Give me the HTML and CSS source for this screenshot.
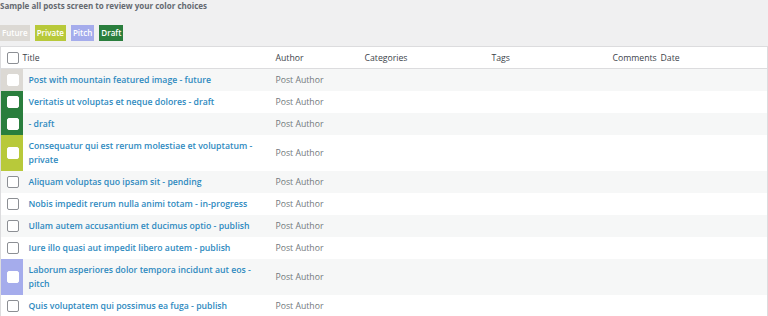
FILE: index.html
```html
<!DOCTYPE html>
<html>
<head>
  <link rel="stylesheet" href="styles.css">
</head>
<body>
  <div class="page">
    <div class="intro">Sample all posts screen to review your color choices</div>

    <div class="legend">
      <span class="badge future">Future</span>
      <span class="badge private">Private</span>
      <span class="badge pitch">Pitch</span>
      <span class="badge draft">Draft</span>
    </div>

    <table class="posts">
      <colgroup>
        <col class="col-cb">
        <col class="col-title">
        <col class="col-author">
        <col class="col-cats">
        <col class="col-tags">
        <col class="col-comments">
        <col class="col-date">
      </colgroup>
      <thead>
        <tr>
          <th class="cb"><span class="check"></span></th>
          <th class="head-title">Title</th>
          <th>Author</th>
          <th>Categories</th>
          <th>Tags</th>
          <th>Comments</th>
          <th>Date</th>
        </tr>
      </thead>
      <tbody>
        <tr class="status-future">
          <td class="cb"><span class="check"></span></td>
          <td class="title"><a href="#">Post with mountain featured image - future</a></td>
          <td class="author">Post Author</td><td></td><td></td><td></td><td></td>
        </tr>
        <tr class="status-draft">
          <td class="cb"><span class="check"></span></td>
          <td class="title"><a href="#">Veritatis ut voluptas et neque dolores - draft</a></td>
          <td class="author">Post Author</td><td></td><td></td><td></td><td></td>
        </tr>
        <tr class="status-draft">
          <td class="cb"><span class="check"></span></td>
          <td class="title"><a href="#">- draft</a></td>
          <td class="author">Post Author</td><td></td><td></td><td></td><td></td>
        </tr>
        <tr class="status-private">
          <td class="cb"><span class="check"></span></td>
          <td class="title"><a href="#">Consequatur qui est rerum molestiae et voluptatum - private</a></td>
          <td class="author">Post Author</td><td></td><td></td><td></td><td></td>
        </tr>
        <tr>
          <td class="cb"><span class="check"></span></td>
          <td class="title"><a href="#">Aliquam voluptas quo ipsam sit - pending</a></td>
          <td class="author">Post Author</td><td></td><td></td><td></td><td></td>
        </tr>
        <tr>
          <td class="cb"><span class="check"></span></td>
          <td class="title"><a href="#">Nobis impedit rerum nulla animi totam - in-progress</a></td>
          <td class="author">Post Author</td><td></td><td></td><td></td><td></td>
        </tr>
        <tr>
          <td class="cb"><span class="check"></span></td>
          <td class="title"><a href="#">Ullam autem accusantium et ducimus optio - publish</a></td>
          <td class="author">Post Author</td><td></td><td></td><td></td><td></td>
        </tr>
        <tr>
          <td class="cb"><span class="check"></span></td>
          <td class="title"><a href="#">Iure illo quasi aut impedit libero autem - publish</a></td>
          <td class="author">Post Author</td><td></td><td></td><td></td><td></td>
        </tr>
        <tr class="status-pitch">
          <td class="cb"><span class="check"></span></td>
          <td class="title"><a href="#">Laborum asperiores dolor tempora incidunt aut eos - pitch</a></td>
          <td class="author">Post Author</td><td></td><td></td><td></td><td></td>
        </tr>
        <tr>
          <td class="cb"><span class="check"></span></td>
          <td class="title"><a href="#">Quis voluptatem qui possimus ea fuga - publish</a></td>
          <td class="author">Post Author</td><td></td><td></td><td></td><td></td>
        </tr>
      </tbody>
    </table>
  </div>
</body>
</html>
```

FILE: styles.css
```css
body {
  margin: 0;
  background: #f0f0f1;
  font-family: "Open Sans", "Liberation Sans", sans-serif;
  color: #3c434a;
}
.intro {
  font-size: 8px;
  font-weight: 700;
  color: #646970;
  line-height: 11px;
  height: 25px;
}
.legend {
  display: flex;
  gap: 5px;
  height: 21px;
}
.badge {
  height: 16px;
  line-height: 16px;
  padding: 0 2px;
  font-size: 8px;
  font-weight: 600;
  color: #fff;
}
.future { background: #dcd9d4; }
.private { background: #b8c93a; }
.pitch { background: #a5acec; }
.draft { background: #2a7e3d; }

.posts {
  width: 767px;
  table-layout: fixed;
  border-collapse: collapse;
  background: #fff;
  border: 1px solid #dcdcde;
  font-size: 8.7px;
}
.col-cb { width: 22px; }
.col-title { width: 253px; }
.col-author { width: 89px; }
.col-cats { width: 127px; }
.col-tags { width: 121px; }
.col-comments { width: 48px; }
.col-date { width: 107px; }

.posts th {
  height: 21px;
  text-align: left;
  font-weight: 400;
  color: #3c434a;
  padding: 0;
  border-bottom: 1px solid #dcdcde;
}
.posts td {
  padding: 0;
  vertical-align: middle;
}
.posts tbody tr:nth-child(odd) {
  background: #f6f7f7;
}
.posts td.title {
  padding: 4px 20px 4px 6px;
  line-height: 14px;
  font-weight: 600;
}
.posts td.title a {
  color: #2e8ac0;
  text-decoration: none;
}
.posts td.author {
  color: #72777c;
  padding-bottom: 1px;
}
.posts .cb {
  text-align: center;
}
.check {
  display: inline-block;
  width: 10px;
  height: 10px;
  border: 1px solid #8c8f94;
  border-radius: 2px;
  background: #fff;
  vertical-align: middle;
  margin-left: 3px;
}
.status-future .cb { background: #dcd9d4; }
.status-draft .cb { background: #2a7e3d; }
.status-private .cb { background: #b8c93a; }
.status-pitch .cb { background: #a5acec; }
.status-future .check,
.status-draft .check,
.status-private .check,
.status-pitch .check {
  border-color: #fff;
}
```
